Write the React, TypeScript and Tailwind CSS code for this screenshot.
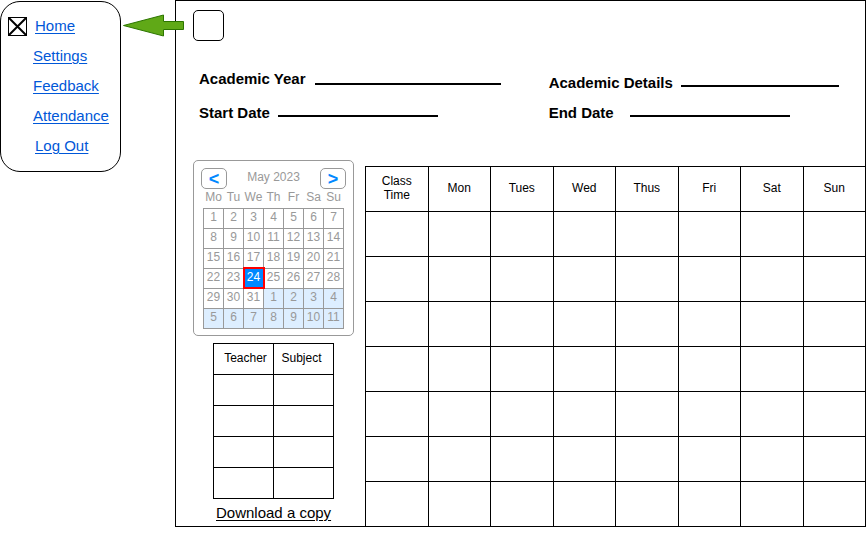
import React from "react";

const menuItems = [
  { label: "Home", indent: true },
  { label: "Settings", indent: false },
  { label: "Feedback", indent: false },
  { label: "Attendance", indent: false },
  { label: "Log Out", indent: true },
];

const weekdays = ["Mo", "Tu", "We", "Th", "Fr", "Sa", "Su"];
const columns = ["Class Time", "Mon", "Tues", "Wed", "Thus", "Fri", "Sat", "Sun"];

// 31 days of May followed by the first 11 days of June
const weeks = Array.from({ length: 6 }, (_, week) =>
  Array.from({ length: 7 }, (_, day) => {
    const index = week * 7 + day + 1;
    return { day: index > 31 ? index - 31 : index, next: index > 31 };
  })
);

function Menu() {
  return (
    <nav
      aria-label="Main"
      className="mt-px flex w-[121px] shrink-0 items-start self-start rounded-[20px] border border-black bg-white pt-[9px] pb-2.5 pl-[7px]"
    >
      <button type="button" aria-label="Close menu" className="mt-1.5 mr-[5px] shrink-0">
        <svg width="20" height="20" viewBox="0 0 20 20" fill="none" stroke="#000">
          <rect x="0.5" y="0.5" width="18" height="18" />
          <path d="M1 1L18 18M18 1L1 18" strokeWidth="2" />
        </svg>
      </button>
      <ul>
        {menuItems.map((item) => (
          <li key={item.label} className={item.indent ? "pl-0.5 leading-[30px]" : "leading-[30px]"}>
            <a href="#" className="text-[#0057d8] underline underline-offset-2">
              {item.label}
            </a>
          </li>
        ))}
      </ul>
    </nav>
  );
}

function Field({ id, label, className, inputClass }: { id: string; label: string; className: string; inputClass: string }) {
  return (
    <div className={`flex items-start ${className}`}>
      <label htmlFor={id} className="shrink-0 leading-5 font-bold">
        {label}
      </label>
      <input
        id={id}
        type="text"
        className={`min-w-0 border-b-2 border-black bg-transparent font-normal outline-none ${inputClass}`}
      />
    </div>
  );
}

function Calendar() {
  const arrow =
    "flex h-[21px] w-[26px] items-center justify-center rounded-[5px] border border-[#999] text-[18px] leading-none font-bold text-[#0088ff]";
  return (
    <section
      aria-label="Calendar"
      className="ml-[17px] w-[161px] rounded-[5px] border border-[#999] pt-[7px] pb-1.5 text-xs text-[#999]"
    >
      <div className="flex items-center justify-between px-[7px]">
        <button type="button" aria-label="Previous month" className={arrow}>
          &lt;
        </button>
        <h2 className="pb-1 text-xs">May 2023</h2>
        <button type="button" aria-label="Next month" className={arrow}>
          &gt;
        </button>
      </div>
      <table className="ml-[9px] w-[141px] table-fixed border-collapse text-center">
        <thead>
          <tr className="h-[19px]">
            {weekdays.map((d) => (
              <th key={d} scope="col" className="p-0 pb-0.5 font-normal leading-[14px]">
                {d}
              </th>
            ))}
          </tr>
        </thead>
        <tbody>
          {weeks.map((week, i) => (
            <tr key={i} className="h-5">
              {week.map(({ day, next }) => {
                const selected = day === 24 && !next;
                return (
                  <td
                    key={day}
                    className={`border border-[#999] p-0 pb-0.5 leading-[14px] ${
                      selected
                        ? "bg-[#0088ff] text-white outline-2 -outline-offset-1 outline-[#f00]"
                        : next
                          ? "bg-[#ddeeff]"
                          : ""
                    }`}
                  >
                    {day}
                  </td>
                );
              })}
            </tr>
          ))}
        </tbody>
      </table>
    </section>
  );
}

function TeacherTable() {
  return (
    <table className="mt-[7px] ml-[37px] w-[121px] table-fixed border-collapse text-xs">
      <thead>
        <tr className="h-[31px]">
          <th scope="col" className="border border-black p-0 pb-0.5 pl-1 font-normal">
            Teacher
          </th>
          <th scope="col" className="border border-black p-0 pr-1 pb-0.5 font-normal">
            Subject
          </th>
        </tr>
      </thead>
      <tbody>
        {[0, 1, 2, 3].map((r) => (
          <tr key={r} className="h-[31px]">
            <td className="border border-black" />
            <td className="border border-black" />
          </tr>
        ))}
      </tbody>
    </table>
  );
}

function Timetable() {
  return (
    <div className="mt-1.5 min-w-0 flex-1">
      <table className="w-full table-fixed border-separate border-spacing-0 text-xs">
        <thead>
          <tr className="h-[45px]">
            {columns.map((c) => (
              <th key={c} scope="col" className="border-t border-l border-black px-3 py-0 pb-0.5 leading-[14px] font-normal">
                {c}
              </th>
            ))}
          </tr>
        </thead>
        <tbody>
          {[0, 1, 2, 3, 4, 5, 6].map((r) => (
            <tr key={r} className="h-[45px]">
              {columns.map((c) => (
                <td key={c} className="border-t border-l border-black p-0" />
              ))}
            </tr>
          ))}
        </tbody>
      </table>
    </div>
  );
}

export default function App() {
  return (
    <div className="flex items-start bg-white font-['Liberation_Sans',Arial,sans-serif] text-[15px] text-black">
      <Menu />
      <div className="relative w-[54px] shrink-0">
        <svg className="absolute top-3 left-0.5 z-10" width="62" height="26" viewBox="0 0 62 26" aria-hidden="true">
          <path d="M0.5 13.5L40.5 3V9.5H60.5V17.5H40.5V24Z" fill="#60a917" stroke="#2d7600" />
        </svg>
      </div>
      <main className="min-w-0 flex-1 border border-black">
        <header className="pt-[9px] pl-[17px]">
          <button type="button" aria-label="Open menu" className="block size-[31px] rounded-[5px] border border-black" />
        </header>
        <form className="mt-7 grid grid-cols-[21fr_19fr] gap-y-2.5 pl-[23px]">
          <Field id="year" label="Academic Year" className="gap-2.5" inputClass="h-4 w-[186px]" />
          <Field id="details" label="Academic Details" className="gap-2 pt-1" inputClass="h-3.5 w-[158px]" />
          <Field id="start" label="Start Date" className="gap-2" inputClass="h-3.5 w-[160px]" />
          <Field id="end" label="End Date" className="gap-4" inputClass="h-3.5 w-[160px]" />
        </form>
        <div className="mt-[37px] flex items-start">
          <div className="w-[189px] shrink-0">
            <Calendar />
            <TeacherTable />
            <a href="#" className="mt-1 ml-10 block w-max leading-5 underline underline-offset-2">
              Download a copy
            </a>
          </div>
          <Timetable />
        </div>
      </main>
    </div>
  );
}
